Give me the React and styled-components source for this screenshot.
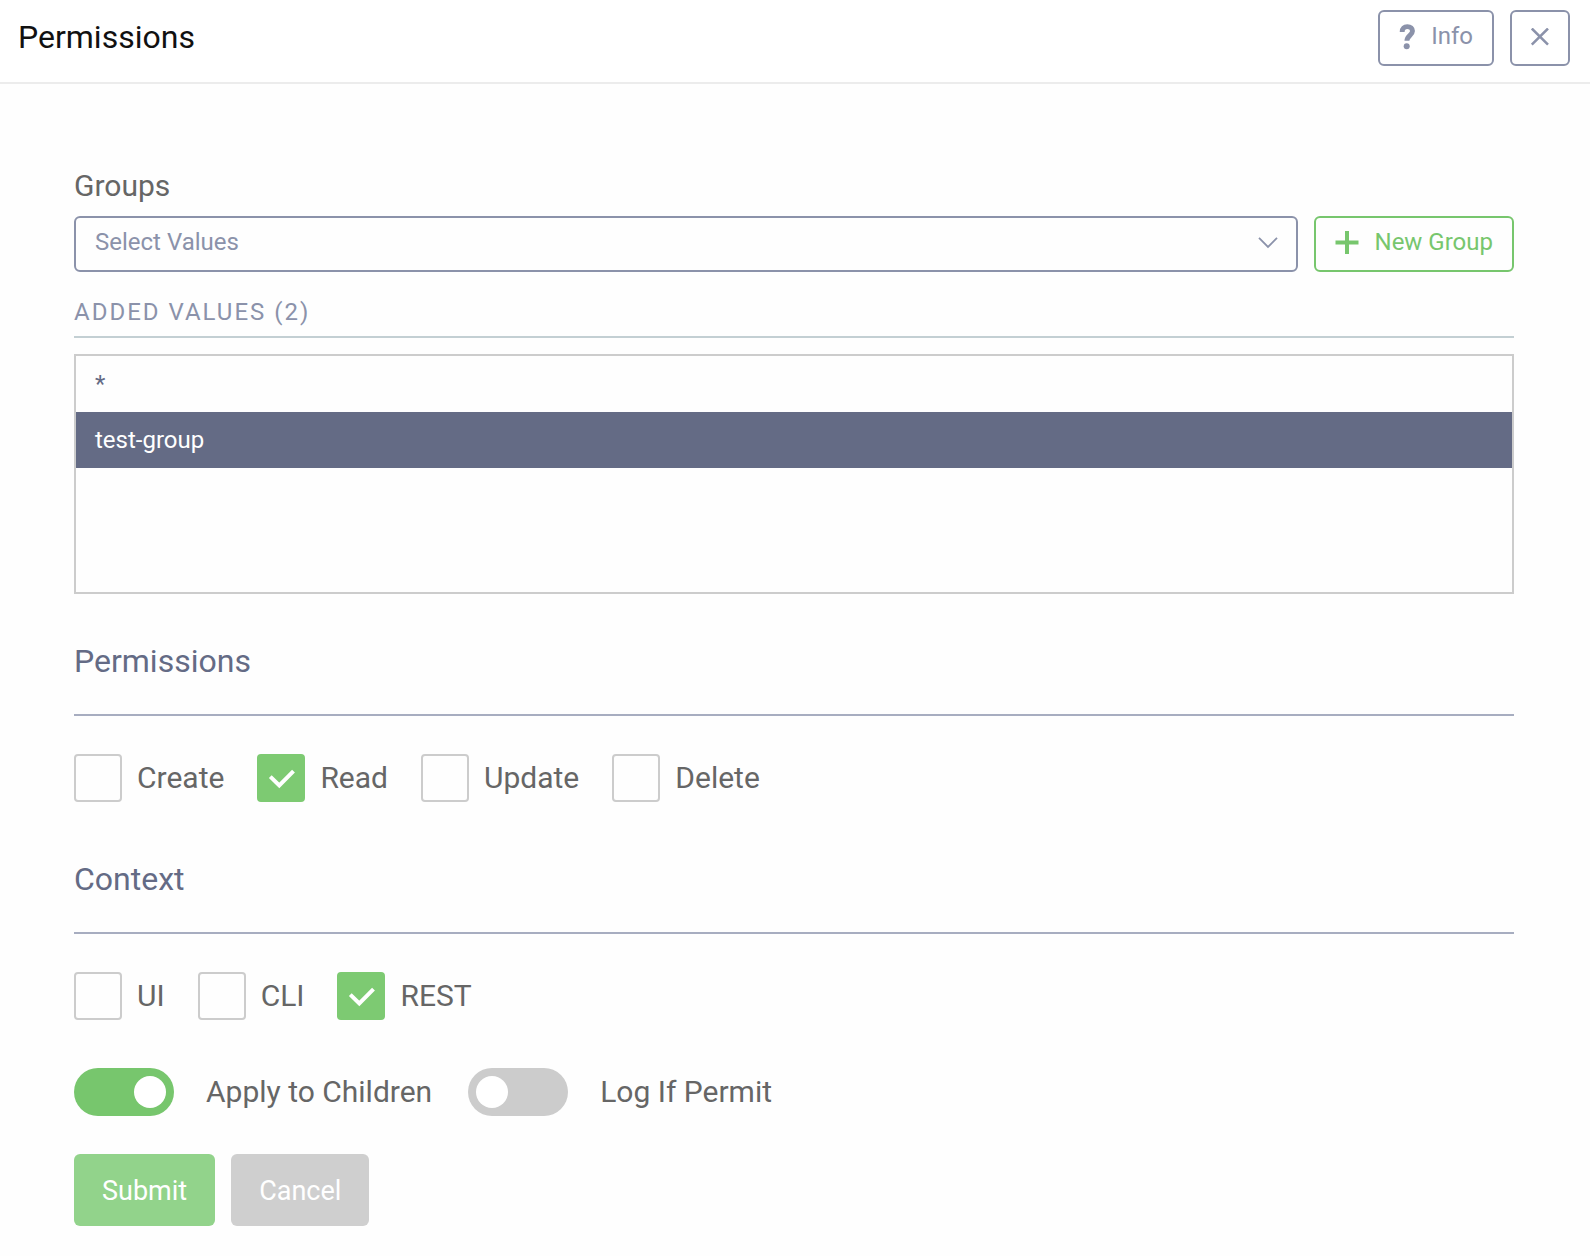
import React, { useState } from "react";
import styled, { createGlobalStyle } from "styled-components";

const color = {
  page: "#fefefe",
  title: "#111111",
  text: "#666666",
  slate: "#8b92aa",
  slateDark: "#646b85",
  green: "#77c66d",
  greenCheck: "#7dca72",
  greenFaded: "#92d38b",
  grey: "#cccccc",
};

const GlobalStyle = createGlobalStyle`
  *, *::before, *::after { box-sizing: border-box; }
  body {
    margin: 0;
    background: ${color.page};
    font-family: Roboto, "Liberation Sans", sans-serif;
    color: ${color.text};
  }
  button, select, input { font-family: inherit; margin: 0; }
`;

const Header = styled.header`
  display: flex;
  align-items: flex-start;
  justify-content: space-between;
  padding: 10px 20px 16px 18px;
  background: #ffffff;
  border-bottom: 2px solid #ececec;
`;

const Title = styled.h1`
  margin: 0;
  font-size: 32px;
  line-height: 54px;
  font-weight: 400;
  color: ${color.title};
`;

const HeaderActions = styled.div`
  display: flex;
  gap: 16px;
`;

const OutlineButton = styled.button`
  display: flex;
  flex: none;
  align-items: center;
  justify-content: center;
  gap: 16px;
  height: 56px;
  padding: 0 ${(p) => (p.$square ? 18 : 19)}px;
  border: 2px solid currentColor;
  border-radius: 6px;
  background: transparent;
  color: ${(p) => (p.$green ? color.green : color.slate)};
  font-size: 24px;
  line-height: 48px;
  cursor: pointer;

  svg { flex: none; }
`;

const ButtonText = styled.span`
  padding-bottom: 4px;
`;

const Form = styled.form`
  padding: 82px 76px 30px 74px;
`;

const FieldLabel = styled.label`
  display: block;
  margin-bottom: 10px;
  font-size: 30px;
  line-height: 40px;
`;

const GroupRow = styled.div`
  display: flex;
  gap: 16px;
`;

const SelectBox = styled.div`
  display: grid;
  flex: 1;
  align-items: center;

  > * { grid-area: 1 / 1; }
  > svg {
    justify-self: end;
    margin-right: 20px;
    pointer-events: none;
  }
`;

const Select = styled.select`
  appearance: none;
  width: 100%;
  height: 56px;
  padding: 0 60px 4px 19px;
  border: 2px solid ${color.slate};
  border-radius: 6px;
  background: transparent;
  color: ${color.slate};
  font-size: 24px;
  line-height: 48px;
`;

const AddedCaption = styled.h2`
  margin: 24px 0 16px;
  padding-bottom: 8px;
  border-bottom: 2px solid #c3cfd3;
  font-size: 24px;
  line-height: 32px;
  font-weight: 400;
  letter-spacing: 2px;
  text-transform: uppercase;
  color: ${color.slate};
`;

const ValueList = styled.ul`
  min-height: 240px;
  margin: 0;
  padding: 0;
  border: 2px solid ${color.grey};
  list-style: none;
`;

const ValueItem = styled.li`
  padding: 0 19px;
  font-size: 24px;
  line-height: 56px;
  background: ${(p) => (p.$selected ? color.slateDark : "transparent")};
  color: ${(p) => (p.$selected ? "#ffffff" : color.slateDark)};
  cursor: pointer;
`;

const Fieldset = styled.fieldset`
  min-width: 0;
  margin: ${(p) => (p.$first ? 48 : 58)}px 0 0;
  padding: 0;
  border: 0;
`;

const Legend = styled.legend`
  width: 100%;
  margin-bottom: 38px;
  padding: 0 0 34px;
  border-bottom: 2px solid #a7adc0;
  font-size: 32px;
  line-height: 38px;
  color: ${color.slateDark};
`;

const OptionRow = styled.div`
  display: flex;
  flex-wrap: wrap;
  gap: 33px;
`;

const OptionLabel = styled.label`
  display: flex;
  align-items: center;
  gap: ${(p) => (p.$toggle ? 32 : 15)}px;
  font-size: 30px;
  line-height: 48px;
  cursor: pointer;
`;

const CheckFrame = styled.span`
  display: grid;
  flex: none;

  > * { grid-area: 1 / 1; }
  > svg { pointer-events: none; }
`;

const CheckInput = styled.input`
  appearance: none;
  width: 48px;
  height: 48px;
  border: 2px solid ${color.grey};
  border-radius: 4px;
  background: transparent;

  &:checked {
    border-color: ${color.greenCheck};
    background: ${color.greenCheck};
  }
`;

const ToggleInput = styled.input`
  appearance: none;
  display: flex;
  flex: none;
  width: 100px;
  height: 48px;
  padding: 8px;
  border-radius: 24px;
  background: ${color.grey};

  &::before {
    content: "";
    width: 32px;
    height: 32px;
    border-radius: 50%;
    background: #ffffff;
  }
  &:checked {
    justify-content: flex-end;
    background: ${color.green};
  }
`;

const ToggleRow = styled(OptionRow)`
  gap: 36px;
  margin-top: 48px;
`;

const FormActions = styled.div`
  display: flex;
  gap: 16px;
  margin-top: 38px;
`;

const SolidButton = styled.button`
  height: 72px;
  padding: 2px 28px 0;
  border: 0;
  border-radius: 6px;
  background: ${(p) => (p.$primary ? color.greenFaded : "#cfcfcf")};
  color: #ffffff;
  font-size: 27px;
  line-height: 70px;
`;

const QuestionIcon = () => (
  <svg width="16" height="28" viewBox="0 0 16 28" fill="none" aria-hidden="true">
    <path
      d="M3.200 8V7.600C3.200 4.500 5.200 2.600 8.300 2.600C11.600 2.600 13.500 4.300 13.500 7C13.500 11.200 7.900 11.600 7.900 16.800"
      stroke="currentColor"
      strokeWidth="4.900"
    />
    <circle cx="7.700" cy="22.200" r="3" fill="currentColor" />
  </svg>
);

const CloseIcon = () => (
  <svg width="20" height="20" viewBox="0 0 20 20" fill="none" aria-hidden="true">
    <path d="M1.800 0.500L18 16.700M18 0.500L1.800 16.700" stroke="currentColor" strokeWidth="2.500" />
  </svg>
);

const PlusIcon = () => (
  <svg width="24" height="26" viewBox="0 0 24 26" fill="none" aria-hidden="true">
    <path d="M12 0V23M0.500 11.500H23.500" stroke="currentColor" strokeWidth="4" />
  </svg>
);

const ChevronIcon = () => (
  <svg width="20" height="14" viewBox="0 0 20 14" fill="none" aria-hidden="true">
    <path d="M1 0.900L10 9.900L19 0.900" stroke={color.slate} strokeWidth="1.800" />
  </svg>
);

const CheckIcon = () => (
  <svg width="48" height="48" viewBox="0 0 48 48" fill="none" aria-hidden="true">
    <path d="M13.300 22.600L22.300 31.400L36.500 17.200" stroke="#ffffff" strokeWidth="4" />
  </svg>
);

function CheckOption({ name, initial = false }) {
  const [checked, setChecked] = useState(initial);
  return (
    <OptionLabel>
      <CheckFrame>
        <CheckInput
          type="checkbox"
          name={name}
          checked={checked}
          onChange={(e) => setChecked(e.target.checked)}
        />
        {checked && <CheckIcon />}
      </CheckFrame>
      {name}
    </OptionLabel>
  );
}

function ToggleOption({ name, initial = false }) {
  return (
    <OptionLabel $toggle>
      <ToggleInput type="checkbox" role="switch" name={name} defaultChecked={initial} />
      {name}
    </OptionLabel>
  );
}

const values = ["*", "test-group"];

export default function App() {
  const [selected, setSelected] = useState("test-group");

  return (
    <>
      <GlobalStyle />
      <Header>
        <Title>Permissions</Title>
        <HeaderActions>
          <OutlineButton type="button">
            <QuestionIcon />
            <ButtonText>Info</ButtonText>
          </OutlineButton>
          <OutlineButton type="button" aria-label="Close" $square>
            <CloseIcon />
          </OutlineButton>
        </HeaderActions>
      </Header>

      <Form onSubmit={(e) => e.preventDefault()}>
        <FieldLabel htmlFor="groups">Groups</FieldLabel>
        <GroupRow>
          <SelectBox>
            <Select id="groups" defaultValue="">
              <option value="">Select Values</option>
            </Select>
            <ChevronIcon />
          </SelectBox>
          <OutlineButton type="button" $green>
            <PlusIcon />
            <ButtonText>New Group</ButtonText>
          </OutlineButton>
        </GroupRow>

        <AddedCaption id="added-values">Added Values ({values.length})</AddedCaption>
        <ValueList role="listbox" aria-labelledby="added-values">
          {values.map((value) => (
            <ValueItem
              key={value}
              role="option"
              aria-selected={value === selected}
              $selected={value === selected}
              onClick={() => setSelected(value)}
            >
              {value}
            </ValueItem>
          ))}
        </ValueList>

        <Fieldset $first>
          <Legend>Permissions</Legend>
          <OptionRow>
            <CheckOption name="Create" />
            <CheckOption name="Read" initial />
            <CheckOption name="Update" />
            <CheckOption name="Delete" />
          </OptionRow>
        </Fieldset>

        <Fieldset>
          <Legend>Context</Legend>
          <OptionRow>
            <CheckOption name="UI" />
            <CheckOption name="CLI" />
            <CheckOption name="REST" initial />
          </OptionRow>
        </Fieldset>

        <ToggleRow>
          <ToggleOption name="Apply to Children" initial />
          <ToggleOption name="Log If Permit" />
        </ToggleRow>

        <FormActions>
          <SolidButton type="submit" $primary>Submit</SolidButton>
          <SolidButton type="button">Cancel</SolidButton>
        </FormActions>
      </Form>
    </>
  );
}
